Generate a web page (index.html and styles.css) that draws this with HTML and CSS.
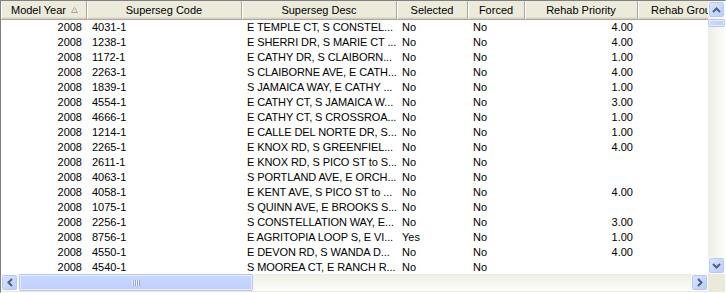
FILE: index.html
```html
<!DOCTYPE html>
<html lang="en">
<head>
    <meta charset="UTF-8">
    <title>Supersegments</title>
    <link rel="stylesheet" href="styles.css">
</head>
<body>
    <div class="grid">
        <div class="grid-view">
            <div class="row head">
                <div class="hcell sorted">Model Year
                    <svg class="sort" width="7" height="6" viewBox="0 0 7 6"><path d="M3.5 0.5 L6.5 5.5 L0.5 5.5 Z" fill="none" stroke="#aca899" stroke-width="1"/></svg>
                </div>
                <div class="hcell">Superseg Code</div>
                <div class="hcell">Superseg Desc</div>
                <div class="hcell">Selected</div>
                <div class="hcell">Forced</div>
                <div class="hcell">Rehab Priority</div>
                <div class="hcell">Rehab Group</div>
            </div>

            <div class="row"><div class="cell num">2008</div><div class="cell">4031-1</div><div class="cell desc">E TEMPLE CT, S CONSTEL...</div><div class="cell">No</div><div class="cell">No</div><div class="cell num">4.00</div><div class="cell"></div></div>
            <div class="row"><div class="cell num">2008</div><div class="cell">1238-1</div><div class="cell desc">E SHERRI DR, S MARIE CT ...</div><div class="cell">No</div><div class="cell">No</div><div class="cell num">4.00</div><div class="cell"></div></div>
            <div class="row"><div class="cell num">2008</div><div class="cell">1172-1</div><div class="cell desc">E CATHY DR, S CLAIBORN...</div><div class="cell">No</div><div class="cell">No</div><div class="cell num">1.00</div><div class="cell"></div></div>
            <div class="row"><div class="cell num">2008</div><div class="cell">2263-1</div><div class="cell desc">S CLAIBORNE AVE, E CATH...</div><div class="cell">No</div><div class="cell">No</div><div class="cell num">4.00</div><div class="cell"></div></div>
            <div class="row"><div class="cell num">2008</div><div class="cell">1839-1</div><div class="cell desc">S JAMAICA WAY, E CATHY ...</div><div class="cell">No</div><div class="cell">No</div><div class="cell num">1.00</div><div class="cell"></div></div>
            <div class="row"><div class="cell num">2008</div><div class="cell">4554-1</div><div class="cell desc">E CATHY CT, S JAMAICA W...</div><div class="cell">No</div><div class="cell">No</div><div class="cell num">3.00</div><div class="cell"></div></div>
            <div class="row"><div class="cell num">2008</div><div class="cell">4666-1</div><div class="cell desc">E CATHY CT, S CROSSROA...</div><div class="cell">No</div><div class="cell">No</div><div class="cell num">1.00</div><div class="cell"></div></div>
            <div class="row"><div class="cell num">2008</div><div class="cell">1214-1</div><div class="cell desc">E CALLE DEL NORTE DR, S...</div><div class="cell">No</div><div class="cell">No</div><div class="cell num">1.00</div><div class="cell"></div></div>
            <div class="row"><div class="cell num">2008</div><div class="cell">2265-1</div><div class="cell desc">E KNOX RD, S GREENFIEL...</div><div class="cell">No</div><div class="cell">No</div><div class="cell num">4.00</div><div class="cell"></div></div>
            <div class="row"><div class="cell num">2008</div><div class="cell">2611-1</div><div class="cell desc">E KNOX RD, S PICO ST to S...</div><div class="cell">No</div><div class="cell">No</div><div class="cell num"></div><div class="cell"></div></div>
            <div class="row"><div class="cell num">2008</div><div class="cell">4063-1</div><div class="cell desc">S PORTLAND AVE, E ORCH...</div><div class="cell">No</div><div class="cell">No</div><div class="cell num"></div><div class="cell"></div></div>
            <div class="row"><div class="cell num">2008</div><div class="cell">4058-1</div><div class="cell desc">E KENT AVE, S PICO ST to ...</div><div class="cell">No</div><div class="cell">No</div><div class="cell num">4.00</div><div class="cell"></div></div>
            <div class="row"><div class="cell num">2008</div><div class="cell">1075-1</div><div class="cell desc">S QUINN AVE, E BROOKS S...</div><div class="cell">No</div><div class="cell">No</div><div class="cell num"></div><div class="cell"></div></div>
            <div class="row"><div class="cell num">2008</div><div class="cell">2256-1</div><div class="cell desc">S CONSTELLATION WAY, E...</div><div class="cell">No</div><div class="cell">No</div><div class="cell num">3.00</div><div class="cell"></div></div>
            <div class="row"><div class="cell num">2008</div><div class="cell">8756-1</div><div class="cell desc">E AGRITOPIA LOOP S, E VI...</div><div class="cell">Yes</div><div class="cell">No</div><div class="cell num">1.00</div><div class="cell"></div></div>
            <div class="row"><div class="cell num">2008</div><div class="cell">4550-1</div><div class="cell desc">E DEVON RD, S WANDA D...</div><div class="cell">No</div><div class="cell">No</div><div class="cell num">4.00</div><div class="cell"></div></div>
            <div class="row"><div class="cell num">2008</div><div class="cell">4540-1</div><div class="cell desc">S MOOREA CT, E RANCH R...</div><div class="cell">No</div><div class="cell">No</div><div class="cell num"></div><div class="cell"></div></div>
        </div>

        <!-- vertical scrollbar -->
        <div class="vscroll">
            <div class="sbtn"><svg width="9" height="6" viewBox="0 0 9 6"><path d="M1 5 L4.5 1.5 L8 5" fill="none" stroke="#4d6185" stroke-width="2"/></svg></div>
            <div class="vtrack"><div class="vthumb"></div></div>
            <div class="sbtn"><svg width="9" height="6" viewBox="0 0 9 6"><path d="M1 1 L4.5 4.5 L8 1" fill="none" stroke="#4d6185" stroke-width="2"/></svg></div>
        </div>

        <!-- horizontal scrollbar -->
        <div class="hscroll">
            <div class="sbtn"><svg width="6" height="9" viewBox="0 0 6 9"><path d="M5 1 L1.5 4.5 L5 8" fill="none" stroke="#4d6185" stroke-width="2"/></svg></div>
            <div class="htrack"><div class="hthumb"><span class="grip"></span></div></div>
            <div class="sbtn"><svg width="6" height="9" viewBox="0 0 6 9"><path d="M1 1 L4.5 4.5 L1 8" fill="none" stroke="#4d6185" stroke-width="2"/></svg></div>
        </div>
        <div class="corner"></div>
    </div>
</body>
</html>
```

FILE: styles.css
```css
body {
    margin: 0;
    background-color: #ece9d8;
    font-family: "Liberation Sans", Arial, sans-serif;
    font-size: 11px;
    color: #000;
}

.grid {
    width: 726px;
    height: 293px;
    box-sizing: border-box;
    display: grid;
    grid-template-columns: 707px 17px;
    grid-template-rows: 273px 17px;
    border: 1px solid;
    border-color: #808080 #ffffff #ffffff #808080;
    padding-bottom: 1px;
    background: #ece9d8;
}

.grid-view {
    background: #fff;
    overflow: hidden;
}

/* rows and header share the same column widths */
.row {
    display: grid;
    grid-template-columns: 86px 155px 155px 71px 57px 113px 93px;
    width: 730px;
    height: 15px;
    line-height: 15px;
}

.row.head {
    height: 19px;
    line-height: 18px;
    background: #ebeadb;
    box-sizing: border-box;
    border-bottom: 1px solid #aca899;
    box-shadow: inset 0 -1px #d6d2c2, inset 0 -2px #e2decd;
}

.hcell {
    box-sizing: border-box;
    border-right: 1px solid #aca899;
    box-shadow: inset 1px 0 #fff;
    text-align: center;
    white-space: nowrap;
    overflow: hidden;
}

.hcell.sorted {
    display: flex;
    justify-content: center;
    align-items: center;
    gap: 5px;
    padding-left: 2px;
}

.sort {
    margin-top: -1px;
}

.cell {
    padding: 0 5px;
    white-space: nowrap;
    overflow: hidden;
}

.cell.num {
    text-align: right;
}

/* long descriptions come pre-trimmed with "..." */
.cell.desc {
    padding-right: 0;
    letter-spacing: -0.1px;
}

/* XP style scrollbars */
.vscroll {
    display: flex;
    flex-direction: column;
    background: linear-gradient(to right, #eeede5, #fdfdfa);
}

.vtrack {
    flex: 1;
    padding-top: 1px;
}

.vthumb {
    height: 8px;
    box-sizing: border-box;
    border: 1px solid #b4c8f6;
    border-radius: 2px;
    background: linear-gradient(to right, #cad8fd, #bdcffc);
    box-shadow: inset 0 0 0 1px #e6eefe;
}

.hscroll {
    display: flex;
    background: linear-gradient(to bottom, #eeede5, #fdfdfa);
}

.htrack {
    flex: 1;
    padding-left: 1px;
}

.hthumb {
    width: 234px;
    height: 17px;
    box-sizing: border-box;
    border: 1px solid #b4c8f6;
    border-radius: 2px;
    background: linear-gradient(to bottom, #cad8fd, #bdcffc);
    box-shadow: inset 0 0 0 1px #e6eefe;
    display: flex;
    justify-content: center;
    align-items: center;
}

.grip {
    width: 8px;
    height: 6px;
    background: repeating-linear-gradient(to right, #eef3fe 0, #eef3fe 1px, #8ca3dd 1px, #8ca3dd 2px);
}

.sbtn {
    width: 17px;
    height: 17px;
    flex: none;
    box-sizing: border-box;
    border: 1px solid #fbfcff;
    border-radius: 3px;
    background: linear-gradient(135deg, #dde7fe, #b7ccfb);
    box-shadow: inset 0 0 0 1px #b4c8f6;
    display: flex;
    justify-content: center;
    align-items: center;
}

.corner {
    background: #ece9d8;
}
```
